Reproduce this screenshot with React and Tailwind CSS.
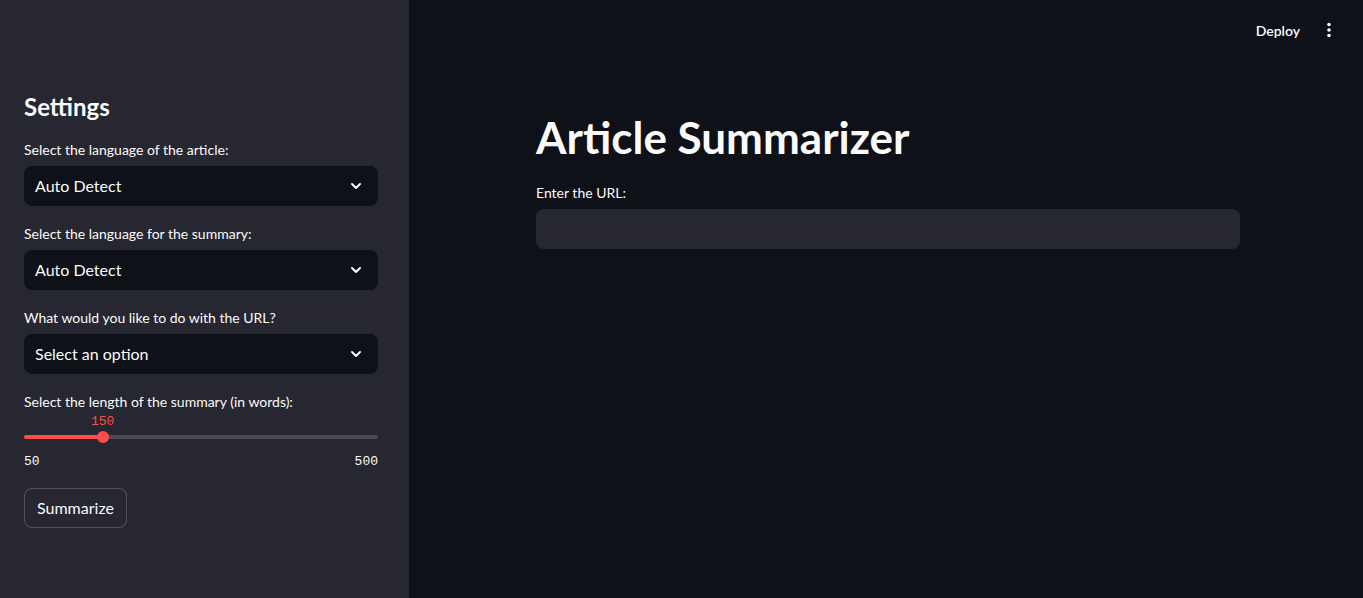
import { ChevronDown } from 'lucide-react';

const font = { fontFamily: '"Lato", "Noto Sans", sans-serif' };

const SelectBox = ({ label, value }) => (
  <div className="flex flex-col">
    <label className="text-[14px] text-[#fafafa] leading-[20px] mb-[6px]">{label}</label>
    <div className="h-[40px] w-full bg-[#0e1117] rounded-lg flex items-center justify-between pl-[11px] pr-[14px]">
      <span className="text-[16px] text-[#fafafa]">{value}</span>
      <ChevronDown className="h-4 w-4 text-[#fafafa]" strokeWidth={3} />
    </div>
  </div>
);

export default function App() {
  const pct = ((150 - 50) / (500 - 50)) * 100;

  return (
    <div className="flex h-[598px] w-full bg-[#0e1117] text-[#fafafa] overflow-hidden" style={font}>
      <aside className="w-[409px] shrink-0 bg-[#262730] pl-6 pr-[31px] pt-[90px]">
        <h2 className="text-[24px] font-bold leading-[34px] mb-[16px]">Settings</h2>
        <div className="flex flex-col gap-[18px]">
          <SelectBox label="Select the language of the article:" value="Auto Detect" />
          <SelectBox label="Select the language for the summary:" value="Auto Detect" />
          <SelectBox label="What would you like to do with the URL?" value="Select an option" />
          <div className="flex flex-col">
            <label className="text-[14px] leading-[20px]">Select the length of the summary (in words):</label>
            <div className="relative h-[36px]">
              <span
                className="absolute top-[3px] -translate-x-1/2 text-[13px] leading-[14px] text-[#ff4b4b]"
                style={{ left: `${pct}%`, fontFamily: '"Liberation Mono", monospace' }}
              >
                150
              </span>
              <div className="absolute left-0 right-0 top-[23px] h-[4px] rounded bg-[#4a4b55]">
                <div className="h-full rounded bg-[#ff4b4b]" style={{ width: `${pct}%` }} />
              </div>
              <div
                className="absolute top-[19px] h-[12px] w-[12px] -translate-x-1/2 rounded-full bg-[#ff4b4b]"
                style={{ left: `${pct}%` }}
              />
            </div>
            <div className="mt-[6px] flex justify-between text-[13px] leading-[16px] text-[#fafafa]" style={{ fontFamily: '"Liberation Mono", monospace' }}>
              <span>50</span>
              <span>500</span>
            </div>
          </div>
        </div>
        <button className="mt-[18px] h-[40px] px-[12px] rounded-lg border border-[#fafafa33] bg-[#262730] text-[16px] text-[#fafafa]">
          Summarize
        </button>
      </aside>

      <main className="flex-1 flex flex-col">
        <header className="h-[60px] flex items-center justify-end pr-[24px] gap-[19px]">
          <span className="text-[14px] font-semibold text-[#fafafa]">Deploy</span>
          <svg width="20" height="20" viewBox="0 0 20 20" className="text-[#fafafa]">
            <circle cx="10" cy="4.5" r="1.8" fill="currentColor" />
            <circle cx="10" cy="10" r="1.8" fill="currentColor" />
            <circle cx="10" cy="15.5" r="1.8" fill="currentColor" />
          </svg>
        </header>
        <div className="pl-[127px] w-[831px] pt-[50px]">
          <h1 className="text-[44px] font-bold leading-[54px]">Article Summarizer</h1>
          <label className="block mt-[19px] text-[14px] leading-[20px]">Enter the URL:</label>
          <div className="mt-[6px] h-[40px] w-[704px] rounded-lg bg-[#262730]" />
        </div>
      </main>
    </div>
  );
}
